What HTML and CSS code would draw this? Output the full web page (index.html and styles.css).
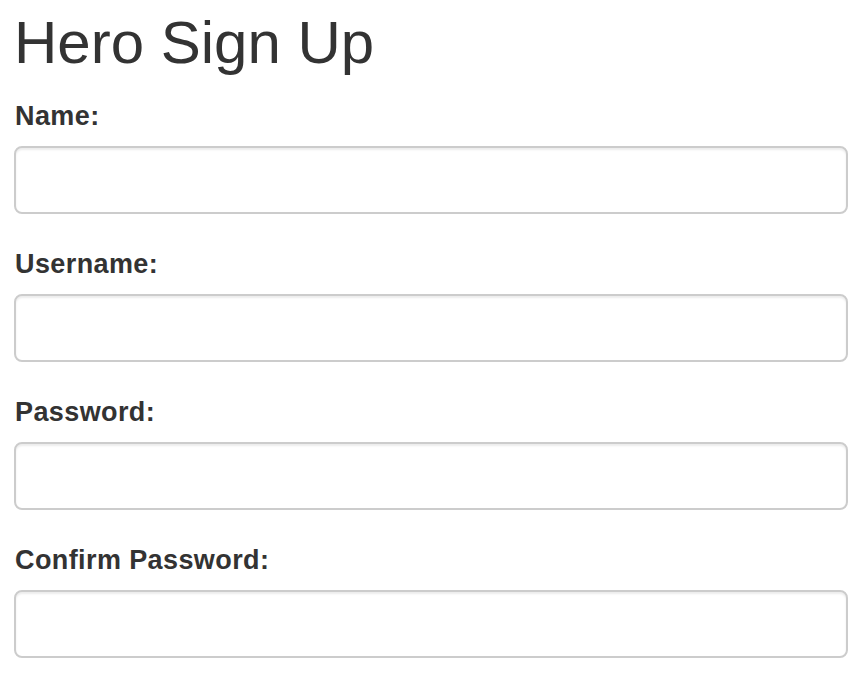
FILE: index.html
```html
<!DOCTYPE html>
<html lang="en">
<head>
<meta charset="utf-8">
<title>Hero Sign Up</title>
<link rel="stylesheet" href="styles.css">
</head>
<body>
<main class="page">
  <h1 class="title">Hero Sign Up</h1>
  <form class="form">
    <div class="field">
      <label class="label" for="name">Name:</label>
      <input class="input" id="name" type="text">
    </div>
    <div class="field">
      <label class="label" for="username">Username:</label>
      <input class="input" id="username" type="text">
    </div>
    <div class="field">
      <label class="label" for="password">Password:</label>
      <input class="input" id="password" type="password">
    </div>
    <div class="field">
      <label class="label" for="confirm">Confirm Password:</label>
      <input class="input" id="confirm" type="password">
    </div>
  </form>
</main>
</body>
</html>
```
FILE: styles.css
```css
html, body {
  margin: 0;
  padding: 0;
  background: #fff;
}
body {
  font-family: "Liberation Sans", Arial, Helvetica, sans-serif;
  color: #333;
}
.page {
  padding: 10px 18px 0 14px;
}
.title {
  margin: 0 0 23px 0;
  font-size: 60px;
  line-height: 66px;
  font-weight: 400;
  color: #333;
}
.form {
  display: flex;
  flex-direction: column;
  gap: 33px;
}
.field {
  display: flex;
  flex-direction: column;
  gap: 12px;
}
.label {
  font-size: 27px;
  line-height: 35px;
  font-weight: 700;
  letter-spacing: 0.4px;
  padding-left: 1px;
}
.input {
  box-sizing: border-box;
  display: block;
  width: 100%;
  height: 68px;
  margin: 0;
  padding: 10px 20px;
  border: 2px solid #ccc;
  border-radius: 8px;
  background: #fff;
  box-shadow: inset 0 2px 2px rgba(0, 0, 0, 0.075);
  font: inherit;
  font-size: 25px;
  color: #555;
  outline: none;
}
```
